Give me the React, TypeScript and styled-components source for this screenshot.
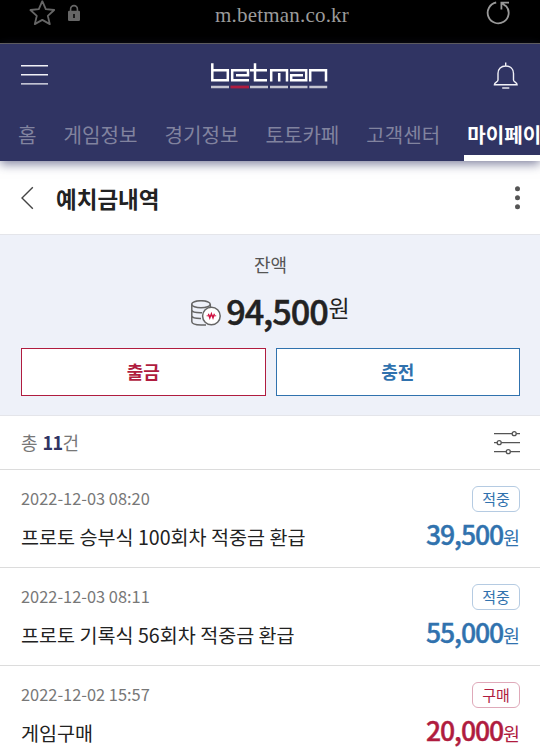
import React from 'react';
import styled, { createGlobalStyle } from 'styled-components';

const NAVY = '#303463';
const RED = '#b01c3f';
const BLUE = '#3072ae';

const GlobalStyle = createGlobalStyle`
  *, *::before, *::after { box-sizing: border-box; }
  html, body { margin: 0; padding: 0; background: #fff; overflow: hidden; }
  body { font-family: 'Noto Sans CJK KR', 'Noto Sans', sans-serif; color: #222; }
  button { font-family: inherit; cursor: pointer; }
  svg { display: block; flex: none; }
`;

const Page = styled.main`
  width: 540px;
  height: 751px;
  overflow: hidden;
  display: flex;
  flex-direction: column;
  background: #fff;
`;

const AddressBar = styled.div`
  flex: none;
  height: 44px;
  display: grid;
  grid-template-columns: 1fr auto 1fr;
  background: #000;
  border-bottom: 1px solid #66635f;
`;

const BarIcons = styled.div<{ $end?: boolean }>`
  display: flex;
  align-items: flex-start;
  gap: 12px;
  justify-content: ${p => (p.$end ? 'flex-end' : 'flex-start')};
  padding: ${p => (p.$end ? '0 29px 0 0' : '0 0 0 29px')};
`;

const Url = styled.span`
  font: 21px/30px 'Liberation Serif', serif;
  letter-spacing: 0.2px;
  color: #9b9b9b;
  white-space: nowrap;
  margin-left: 24px;
`;

const Header = styled.header`
  flex: none;
  height: 117px;
  background: ${NAVY};
  box-shadow: 0 3px 10px 0 rgba(48, 52, 99, 0.62);
`;

const BrandRow = styled.div`
  height: 64px;
  display: flex;
  justify-content: space-between;
  align-items: flex-start;
  padding: 18px 21px 0;
`;

const Nav = styled.nav`
  height: 53px;
  display: flex;
  gap: 27px;
  padding-left: 18px;
  overflow: hidden;
`;

const NavItem = styled.a<{ $active?: boolean }>`
  flex: none;
  height: 53px;
  font-size: 20.1px;
  line-height: 53px;
  white-space: nowrap;
  color: ${p => (p.$active ? '#fff' : '#81839f')};
  font-weight: ${p => (p.$active ? 700 : 400)};
  ${p => p.$active && 'margin-left: -3px; padding: 0 3px; border-bottom: 6px solid #fff;'}
`;

const TitleRow = styled.section`
  flex: none;
  height: 74px;
  display: flex;
  align-items: center;
  padding: 0 20px 0 21px;
  border-bottom: 1px solid #e4e5ea;
`;

const Title = styled.h1`
  margin: 0 auto 0 21px;
  font-size: 22.5px;
  line-height: 32px;
  font-weight: 700;
`;

const Balance = styled.section`
  flex: none;
  height: 181px;
  padding: 16px 20px 0 21px;
  background: #eef1f9;
  border-bottom: 1px solid #e4e5ea;
`;

const BalanceLabel = styled.div`
  font-size: 18px;
  line-height: 26px;
  text-align: center;
  color: #555;
`;

const BalanceAmount = styled.div`
  height: 71px;
  display: flex;
  align-items: center;
  justify-content: center;
`;

const BalanceNumber = styled.strong`
  margin: -6px 0 0 5px;
  font-size: 34.3px;
  line-height: 50px;
  font-weight: 500;
  letter-spacing: -1.1px;
  -webkit-text-stroke: 0.5px currentColor;
`;

const BalanceUnit = styled.span`
  font-size: 23px;
  line-height: 32px;
  margin: -11px 0 0 1px;
`;

const Actions = styled.div`
  display: grid;
  grid-template-columns: 1fr 1fr;
  gap: 10px;
`;

const ActionButton = styled.button<{ $color: string }>`
  height: 48px;
  padding: 0 0 2px;
  border: 1px solid ${p => p.$color};
  background: #fff;
  color: ${p => p.$color};
  font-size: 18px;
  font-weight: 700;
`;

const Summary = styled.section`
  flex: none;
  height: 54px;
  display: flex;
  align-items: center;
  justify-content: space-between;
  padding: 0 20px 0 21px;
  border-bottom: 1px solid #dcdcdc;
`;

const Count = styled.span`
  margin-bottom: 2px;
  font-size: 18px;
  line-height: 26px;
  color: #777;
  b { color: ${NAVY}; margin-left: 1px; letter-spacing: -0.7px; }
`;

const List = styled.ul`
  margin: 0;
  padding: 0;
  list-style: none;
`;

const Entry = styled.li`
  height: 98px;
  display: flex;
  justify-content: space-between;
  padding: 16px 20px 0 21px;
  border-bottom: 1px solid #dcdcdc;
`;

const EntryInfo = styled.div`
  display: flex;
  flex-direction: column;
`;

const EntryDate = styled.time`
  font-size: 16.4px;
  line-height: 24px;
  color: #777;
`;

const EntryName = styled.span`
  margin-top: 12px;
  font-size: 19.6px;
  line-height: 30px;
`;

const EntryResult = styled.div<{ $color: string }>`
  display: flex;
  flex-direction: column;
  align-items: flex-end;
  color: ${p => p.$color};
`;

const Badge = styled.span<{ $border: string }>`
  width: 48px;
  height: 26px;
  border: 1px solid ${p => p.$border};
  border-radius: 6px;
  font-size: 15px;
  line-height: 23px;
  text-align: center;
`;

const Amount = styled.span`
  margin-top: 4px;
  font-size: 18.4px;
  line-height: 36px;
  white-space: nowrap;
  b {
    font-size: 26.6px;
    font-weight: 500;
    letter-spacing: -1.1px;
    -webkit-text-stroke: 0.4px currentColor;
  }
`;

const StarIcon = () => (
  <svg width="27" height="27" viewBox="0 0 27 27" fill="none" stroke="#666" strokeWidth="1.8" strokeLinejoin="round">
    <path d="M13.3 1.2 16.8 9.2 25.2 10 18.8 15.8 20.8 24.1 13.3 19.9 5.8 24.1 7.8 15.8 1.4 10 9.8 9.2Z" />
  </svg>
);

const LockIcon = () => (
  <svg width="13" height="24" viewBox="0 0 13 24">
    <path d="M2.6 12V9a3.4 3.4 0 0 1 6.8 0V12" fill="none" stroke="#666" strokeWidth="1.6" />
    <rect x="0" y="10.7" width="12" height="10.3" rx="1.2" fill="#666" />
    <path d="M6 14v4" stroke="#111" strokeWidth="1.8" />
  </svg>
);

const ReloadIcon = () => (
  <svg width="26" height="26" viewBox="0 0 26 26" fill="none" stroke="#999" strokeWidth="1.8">
    <path d="M11.2 2.5A10.5 10.5 0 1 0 21 5.8" />
    <path d="M16.4 9.6V2.6H24M17 3.2 21 6.2" />
  </svg>
);

const MenuIcon = () => (
  <svg width="27" height="26" viewBox="0 0 27 26" stroke="#f1f1f7" strokeWidth="1.4">
    <path d="M0 3.7H27M0 12.7H27M0 21.9H27" />
  </svg>
);

/* Squared wordmark over a segmented underline */
const LogoMark = styled.svg`
  margin-left: -2px;
`;

const Logo = () => (
  <LogoMark width="117" height="27" viewBox="0 0 117 27" fill="none" stroke="#fff" strokeWidth="2.5">
    <path d="M1.3 1.3V18.2H16.8V8.2H1.3" />
    <path d="M38 18.2H21.2V8.2H37V13.2H25" />
    <path d="M44 1.3V18.2H56M39 8.2H56" />
    <path d="M60.2 19.6V8.2H76V19.6M68.2 11V19.6" />
    <path d="M79 8.2H95.2V18.2H80.2V13.2H92" />
    <path d="M99.2 19.6V8.2H115V19.6" />
    <path d="M0 25H18M39 25H57M59 25H77M79 25H96.5M98.3 25H116.2" stroke="#c4c4d0" strokeWidth="2.4" />
    <path d="M19.5 25H38" stroke="#b01c3f" strokeWidth="2.8" />
  </LogoMark>
);

const BellIcon = () => (
  <svg width="26" height="28" viewBox="0 0 26 28" fill="none" stroke="#f1f1f7" strokeWidth="1.4">
    <path d="M12.7 0.4V4M5 18V11.5C5 6.9 8.1 4 12.7 4S20.5 6.9 20.5 11.5V18C20.5 20 24.1 20.2 24.1 22.7H1.4C1.4 20.2 5 20 5 18Z" />
    <path d="M9.2 26H16.3" />
  </svg>
);

const BackIcon = () => (
  <svg width="14" height="24" viewBox="0 0 14 24" fill="none" stroke="#444" strokeWidth="1.4">
    <path d="M11.8 1.2 1 12 11.8 22.8" />
  </svg>
);

const MoreIcon = () => (
  <svg width="5" height="24" viewBox="0 0 5 24" fill="#555">
    <circle cx="2.5" cy="2.8" r="2.5" />
    <circle cx="2.5" cy="11.8" r="2.5" />
    <circle cx="2.5" cy="20.8" r="2.5" />
  </svg>
);

const CoinsIcon = () => (
  <svg width="30" height="26" viewBox="0 0 30 26" fill="none" stroke="#666" strokeWidth="1.5">
    <ellipse cx="10" cy="4.2" rx="9.3" ry="3.5" />
    <path d="M0.8 4.2V21.5C0.8 23.7 4.9 24.9 10 24.9H15M19.3 4.2V8M0.7 10C1.2 12 5 13 11 12.8M0.7 15.8C1.2 17.6 5 18.7 10 18.6" />
    <circle cx="20.4" cy="16" r="8.8" fill="#fff" />
    <path d="M17.4 13.7 18.8 18 20.4 13.7 22 18 23.4 13.7" stroke="#d01443" strokeWidth="1.3" />
    <path d="M15.6 15.8H25.2" stroke="#d01443" strokeWidth="0.9" />
  </svg>
);

const FilterIcon = () => (
  <svg width="26" height="24" viewBox="0 0 26 24" fill="#fff" stroke="#555" strokeWidth="1.3">
    <path d="M0 2.7H26M0 11.7H26M0 20.7H26" />
    <circle cx="20.2" cy="2.7" r="2" />
    <circle cx="5.2" cy="11.7" r="2" />
    <circle cx="14.3" cy="20.7" r="2" />
  </svg>
);

const menu = ['홈', '게임정보', '경기정보', '토토카페', '고객센터', '마이페이지'];

const entries = [
  { date: '2022-12-03 08:20', name: '프로토 승부식 100회차 적중금 환급', kind: '적중', amount: '39,500' },
  { date: '2022-12-03 08:11', name: '프로토 기록식 56회차 적중금 환급', kind: '적중', amount: '55,000' },
  { date: '2022-12-02 15:57', name: '게임구매', kind: '구매', amount: '20,000' },
];

export default function App() {
  return (
    <Page>
      <GlobalStyle />
      <AddressBar>
        <BarIcons><StarIcon /><LockIcon /></BarIcons>
        <Url>m.betman.co.kr</Url>
        <BarIcons $end><ReloadIcon /></BarIcons>
      </AddressBar>
      <Header>
        <BrandRow><MenuIcon /><Logo /><BellIcon /></BrandRow>
        <Nav>
          {menu.map(label => (
            <NavItem key={label} $active={label === '마이페이지'}>{label}</NavItem>
          ))}
        </Nav>
      </Header>
      <TitleRow>
        <BackIcon />
        <Title>예치금내역</Title>
        <MoreIcon />
      </TitleRow>
      <Balance>
        <BalanceLabel>잔액</BalanceLabel>
        <BalanceAmount>
          <CoinsIcon />
          <BalanceNumber>94,500</BalanceNumber>
          <BalanceUnit>원</BalanceUnit>
        </BalanceAmount>
        <Actions>
          <ActionButton $color={RED}>출금</ActionButton>
          <ActionButton $color={BLUE}>충전</ActionButton>
        </Actions>
      </Balance>
      <Summary>
        <Count>총 <b>11</b>건</Count>
        <FilterIcon />
      </Summary>
      <List>
        {entries.map(e => {
          const win = e.kind === '적중';
          return (
            <Entry key={e.date}>
              <EntryInfo>
                <EntryDate>{e.date}</EntryDate>
                <EntryName>{e.name}</EntryName>
              </EntryInfo>
              <EntryResult $color={win ? BLUE : RED}>
                <Badge $border={win ? '#b5cbe2' : '#dfa9b9'}>{e.kind}</Badge>
                <Amount><b>{e.amount}</b>원</Amount>
              </EntryResult>
            </Entry>
          );
        })}
      </List>
    </Page>
  );
}
